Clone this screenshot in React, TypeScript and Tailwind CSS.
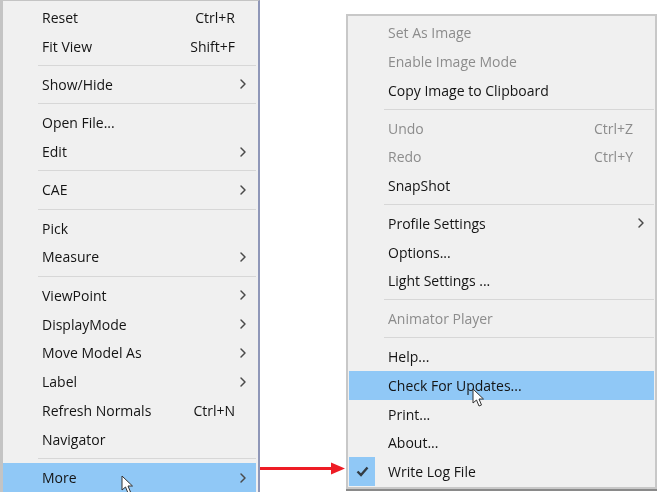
import { ChevronRight } from 'lucide-react'

type Entry =
  | { sep: true }
  | { sep?: false; label: string; keys?: string; sub?: boolean; off?: boolean; hot?: boolean; checked?: boolean }

const viewMenu: Entry[] = [
  { label: 'Reset', keys: 'Ctrl+R' },
  { label: 'Fit View', keys: 'Shift+F' },
  { sep: true },
  { label: 'Show/Hide', sub: true },
  { sep: true },
  { label: 'Open File...' },
  { label: 'Edit', sub: true },
  { sep: true },
  { label: 'CAE', sub: true },
  { sep: true },
  { label: 'Pick' },
  { label: 'Measure', sub: true },
  { sep: true },
  { label: 'ViewPoint', sub: true },
  { label: 'DisplayMode', sub: true },
  { label: 'Move Model As', sub: true },
  { label: 'Label', sub: true },
  { label: 'Refresh Normals', keys: 'Ctrl+N' },
  { label: 'Navigator' },
  { sep: true },
  { label: 'More', sub: true, hot: true },
]

const moreMenu: Entry[] = [
  { label: 'Set As Image', off: true },
  { label: 'Enable Image Mode', off: true },
  { label: 'Copy Image to Clipboard' },
  { sep: true },
  { label: 'Undo', keys: 'Ctrl+Z', off: true },
  { label: 'Redo', keys: 'Ctrl+Y', off: true },
  { label: 'SnapShot' },
  { sep: true },
  { label: 'Profile Settings', sub: true },
  { label: 'Options...' },
  { label: 'Light Settings ...' },
  { sep: true },
  { label: 'Animator Player', off: true },
  { sep: true },
  { label: 'Help...' },
  { label: 'Check For Updates...', hot: true },
  { label: 'Print...' },
  { label: 'About...' },
  { label: 'Write Log File', checked: true },
]

function Rows({ items, rowHeight }: { items: Entry[]; rowHeight: string }) {
  return (
    <>
      {items.map((item, i) => {
        if (item.sep) {
          return (
            <div key={i} className="h-[9.5px] flex items-center pl-[35px]">
              <div className="h-px w-full bg-[#d7d7d7]" />
            </div>
          )
        }
        return (
          <div
            key={i}
            className={`${rowHeight} flex items-center ${item.hot ? 'bg-[#90c8f6]' : ''} ${item.off ? 'text-[#8c8c8c]' : 'text-[#141414]'}`}
          >
            <div className="w-[39px] h-full shrink-0 flex items-center">
              {item.checked && (
                <div className="w-[26px] h-full bg-[#90c8f6] flex items-center justify-center">
                  <svg width="13" height="11" viewBox="0 0 13 11" fill="none" stroke="#333c44" strokeWidth="2.4">
                    <path d="M1.5 5.5L5 9L11.5 1.5" />
                  </svg>
                </div>
              )}
            </div>
            <span className="flex-1">{item.label}</span>
            {item.keys && <span className="mr-[21px]">{item.keys}</span>}
            {item.sub && <ChevronRight size={16} strokeWidth={2.2} className="mr-[5.5px] text-[#4a4a4a]" />}
          </div>
        )
      })}
    </>
  )
}

function Pointer({ className }: { className: string }) {
  return (
    <svg className={className} width="14" height="20" viewBox="0 0 14 20" fill="#ffffff" stroke="#333333" strokeWidth="1">
      <path d="M1 1V15L4.5 12L7 18L9.5 17L7 11H11.5Z" />
    </svg>
  )
}

export default function App() {
  return (
    <div className="relative w-[657px] h-[492px] overflow-hidden bg-white flex items-start blur-[0.4px] font-['Open_Sans','Noto_Sans',sans-serif] text-[14px]">
      <div className="w-[260px] h-[492px] shrink-0 bg-[#f0f0f0] border-l-[3px] border-t border-r-2 border-[#c4c4c4] border-r-[#8f97b8] pt-[2px] pr-[2px]">
        <Rows items={viewMenu} rowHeight="h-[28.8px]" />
      </div>

      <div className="ml-[86px] mt-[14px] w-[311px] shrink-0 h-[475px] bg-[#f0f0f0] border-2 border-[#c8c8c8] shadow-[0_2px_0_#8a8a8a] pt-[2.6px] pl-px pr-px">
        <Rows items={moreMenu} rowHeight="h-[28.6px]" />
      </div>

      <svg className="absolute left-[260px] top-[460px]" width="86" height="16" viewBox="0 0 86 16">
        <path d="M0 8.5H72" stroke="#ee1c25" strokeWidth="3" />
        <path d="M71 2.5L85 8.5L71 14.5Z" fill="#ee1c25" />
      </svg>

      <Pointer className="absolute left-[121px] top-[475px]" />
      <Pointer className="absolute left-[472px] top-[388px]" />
    </div>
  )
}
